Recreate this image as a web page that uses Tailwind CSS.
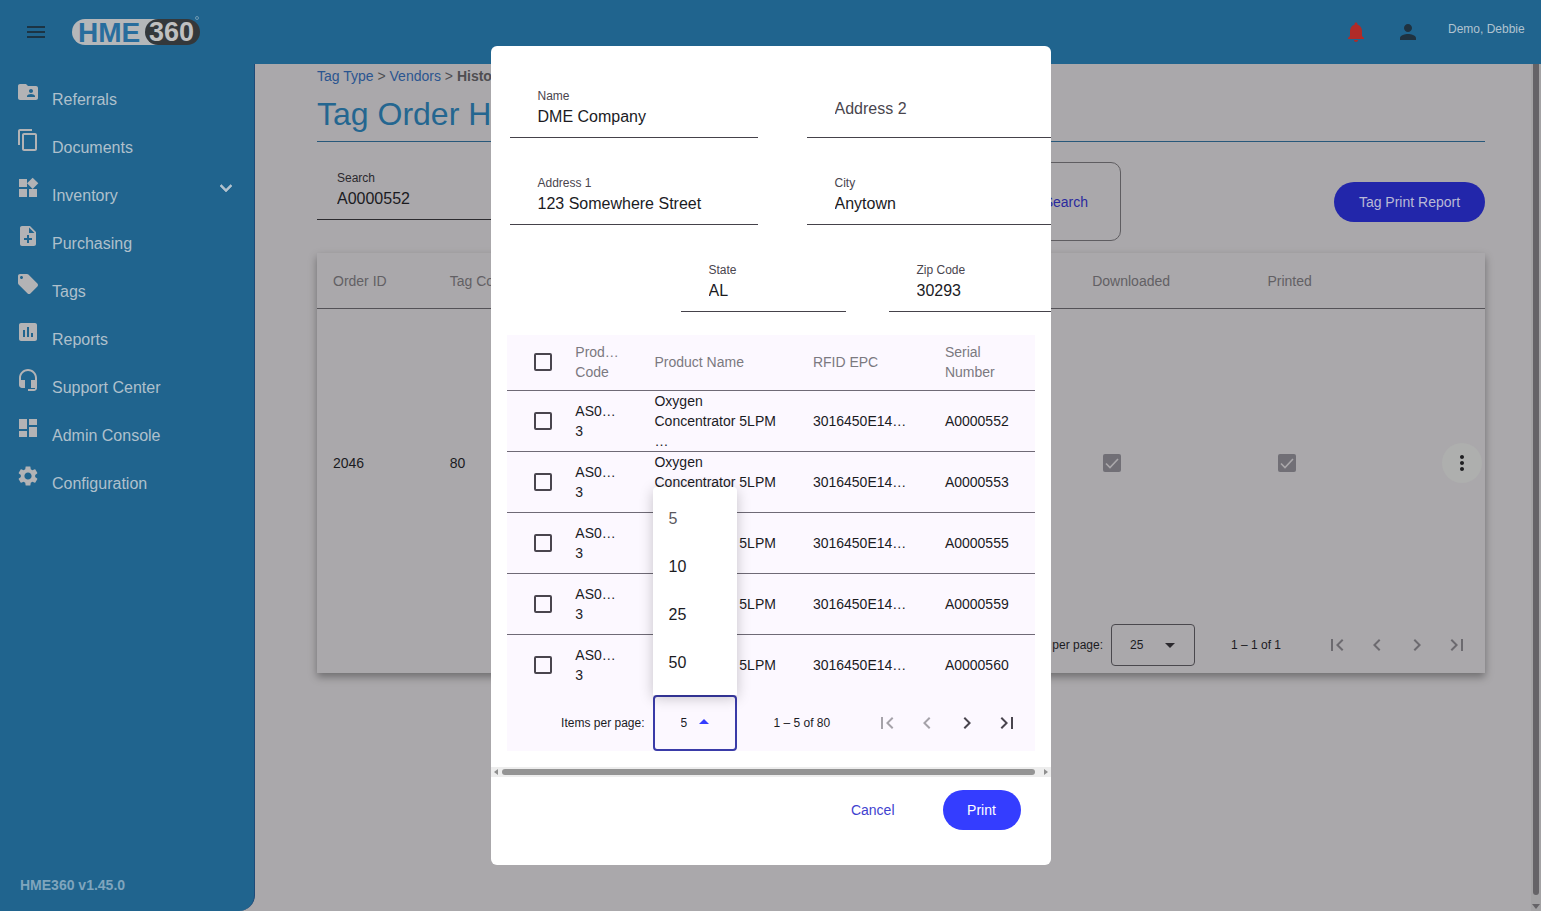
<!DOCTYPE html>
<html lang="en">

<head>
    <meta charset="UTF-8">
    <meta name="viewport" content="width=device-width, initial-scale=1.0">
    <title>HME360 - Tag Order History</title>
    <script src="https://cdn.jsdelivr.net/npm/@tailwindcss/browser@4"></script>
</head>

<body class="flex h-screen flex-col overflow-hidden bg-[#aaa8ab] font-['Liberation_Sans',Arial,sans-serif] text-sm text-[#1b1b1f]">

    <!-- Top bar -->
    <header class="flex h-16 shrink-0 items-center bg-[#20648e] pl-6 pr-4">
        <button aria-label="Menu" class="text-[#1c3444]">
            <svg class="size-6" viewBox="0 0 24 24" fill="currentColor"><path d="M3 18h18v-2H3v2zm0-5h18v-2H3v2zm0-7v2h18V6H3z"/></svg>
        </button>
        <a href="#" aria-label="HME360" class="ml-6">
            <svg class="h-8 w-[130px]" viewBox="0 0 130 32" font-family="Liberation Sans, Arial, sans-serif" font-weight="bold">
                <rect x="0" y="3" width="100" height="26" rx="13" fill="#b5b7b9"/>
                <rect x="73" y="3" width="55" height="26" rx="13" fill="#34383b"/>
                <text x="6" y="26" font-size="28" fill="#286d9d">HME</text>
                <text x="77" y="25" font-size="27" fill="#c0c0c0">360</text>
                <circle cx="125" cy="2" r="1.5" fill="none" stroke="#6f99b2"/>
            </svg>
        </a>
        <button aria-label="Notifications" class="ml-auto text-[#b02b28]">
            <svg class="size-6" viewBox="0 0 24 24" fill="currentColor"><path d="M12 22c1.1 0 2-.9 2-2h-4c0 1.1.89 2 2 2zm6-6v-5c0-3.07-1.64-5.64-4.5-6.32V4c0-.83-.67-1.5-1.5-1.5s-1.5.67-1.5 1.5v.68C7.63 5.36 6 7.92 6 11v5l-2 2v1h16v-1l-2-2z"/></svg>
        </button>
        <button aria-label="Account" class="ml-7 text-[#1f3240]">
            <svg class="size-6" viewBox="0 0 24 24" fill="currentColor"><path d="M12 12c2.21 0 4-1.79 4-4s-1.79-4-4-4-4 1.79-4 4 1.79 4 4 4zm0 2c-2.67 0-8 1.34-8 4v2h16v-2c0-2.66-5.33-4-8-4z"/></svg>
        </button>
        <span class="ml-7 w-[77px] pb-[6px] text-xs text-[#b0c3d0]">Demo, Debbie</span>
    </header>

    <div class="flex min-h-0 flex-1">

        <!-- Side navigation -->
        <aside class="flex w-[255px] shrink-0 flex-col rounded-br-2xl border-r border-[#1d4a78] bg-[#20648e]">
            <nav class="flex flex-col pt-4 text-base text-[#afc0cc]">
                <a href="#" class="flex h-12 items-start gap-3 pl-4">
                    <svg class="size-6 text-[#b3b3b5]" viewBox="0 0 24 24" fill="currentColor"><path d="M20 6h-8l-2-2H4c-1.1 0-1.99.9-1.99 2L2 18c0 1.1.9 2 2 2h16c1.1 0 2-.9 2-2V8c0-1.1-.9-2-2-2zm-5 3c1.1 0 2 .9 2 2s-.9 2-2 2-2-.9-2-2 .9-2 2-2zm4 8h-8v-1c0-1.33 2.67-2 4-2s4 .67 4 2v1z"/></svg>
                    <span class="pt-2">Referrals</span>
                </a>
                <a href="#" class="flex h-12 items-start gap-3 pl-4">
                    <svg class="size-6 text-[#b3b3b5]" viewBox="0 0 24 24" fill="currentColor"><path d="M16 1H4c-1.1 0-2 .9-2 2v14h2V3h12V1zm3 4H8c-1.1 0-2 .9-2 2v14c0 1.1.9 2 2 2h11c1.1 0 2-.9 2-2V7c0-1.1-.9-2-2-2zm0 16H8V7h11v14z"/></svg>
                    <span class="pt-2">Documents</span>
                </a>
                <a href="#" class="flex h-12 items-start gap-3 pl-4 pr-4">
                    <svg class="size-6 text-[#b3b3b5]" viewBox="0 0 24 24" fill="currentColor"><path d="M13 13v8h8v-8h-8zM3 21h8v-8H3v8zM3 3v8h8V3H3zm13.66-1.31L11 7.34 16.66 13l5.66-5.66-5.66-5.65z"/></svg>
                    <span class="pt-2">Inventory</span>
                    <svg class="ml-auto size-6 text-[#b3c3ce]" viewBox="0 0 24 24" fill="currentColor" stroke="currentColor" stroke-width=".6"><path d="M7.41 8.59L12 13.17l4.59-4.58L18 10l-6 6-6-6z"/></svg>
                </a>
                <a href="#" class="flex h-12 items-start gap-3 pl-4">
                    <svg class="size-6 text-[#b3b3b5]" viewBox="0 0 24 24" fill="currentColor"><path d="M14 2H6c-1.1 0-1.99.9-1.99 2L4 20c0 1.1.89 2 1.99 2H18c1.1 0 2-.9 2-2V8l-6-6zm2 14h-3v3h-2v-3H8v-2h3v-3h2v3h3v2zm-3-7V3.5L18.5 9H13z"/></svg>
                    <span class="pt-2">Purchasing</span>
                </a>
                <a href="#" class="flex h-12 items-start gap-3 pl-4">
                    <svg class="size-6 text-[#b3b3b5]" viewBox="0 0 24 24" fill="currentColor"><path d="M21.41 11.58l-9-9C12.05 2.22 11.55 2 11 2H4c-1.1 0-2 .9-2 2v7c0 .55.22 1.05.59 1.42l9 9c.36.36.86.58 1.41.58.55 0 1.05-.22 1.41-.59l7-7c.37-.36.59-.86.59-1.41 0-.55-.23-1.06-.59-1.42zM5.5 7C4.67 7 4 6.33 4 5.5S4.67 4 5.5 4 7 4.67 7 5.5 6.33 7 5.5 7z"/></svg>
                    <span class="pt-2">Tags</span>
                </a>
                <a href="#" class="flex h-12 items-start gap-3 pl-4">
                    <svg class="size-6 text-[#b3b3b5]" viewBox="0 0 24 24" fill="currentColor"><path d="M19 3H5c-1.1 0-2 .9-2 2v14c0 1.1.9 2 2 2h14c1.1 0 2-.9 2-2V5c0-1.1-.9-2-2-2zM9 17H7v-7h2v7zm4 0h-2V7h2v10zm4 0h-2v-4h2v4z"/></svg>
                    <span class="pt-2">Reports</span>
                </a>
                <a href="#" class="flex h-12 items-start gap-3 pl-4">
                    <svg class="size-6 text-[#b3b3b5]" viewBox="0 0 24 24" fill="currentColor"><path d="M12 1c-4.97 0-9 4.03-9 9v7c0 1.66 1.34 3 3 3h3v-8H5v-2c0-3.87 3.13-7 7-7s7 3.13 7 7v2h-4v8h4v1h-7v2h6c1.66 0 3-1.34 3-3V10c0-4.97-4.03-9-9-9z"/></svg>
                    <span class="pt-2">Support Center</span>
                </a>
                <a href="#" class="flex h-12 items-start gap-3 pl-4">
                    <svg class="size-6 text-[#b3b3b5]" viewBox="0 0 24 24" fill="currentColor"><path d="M3 13h8V3H3v10zm0 8h8v-6H3v6zm10 0h8V11h-8v10zm0-18v6h8V3h-8z"/></svg>
                    <span class="pt-2">Admin Console</span>
                </a>
                <a href="#" class="flex h-12 items-start gap-3 pl-4">
                    <svg class="size-6 text-[#b3b3b5]" viewBox="0 0 24 24" fill="currentColor"><path d="M19.14 12.94c.04-.3.06-.61.06-.94 0-.32-.02-.64-.07-.94l2.03-1.58c.18-.14.23-.41.12-.61l-1.92-3.32c-.12-.22-.37-.29-.59-.22l-2.39.96c-.5-.38-1.03-.7-1.62-.94l-.36-2.54c-.04-.24-.24-.41-.48-.41h-3.84c-.24 0-.43.17-.47.41l-.36 2.54c-.59.24-1.13.57-1.62.94l-2.39-.96c-.22-.08-.47 0-.59.22L2.74 8.87c-.12.21-.08.47.12.61l2.03 1.58c-.05.3-.09.63-.09.94s.02.64.07.94l-2.03 1.58c-.18.14-.23.41-.12.61l1.92 3.32c.12.22.37.29.59.22l2.39-.96c.5.38 1.03.7 1.62.94l.36 2.54c.05.24.24.41.48.41h3.84c.24 0 .44-.17.47-.41l.36-2.54c.59-.24 1.13-.56 1.62-.94l2.39.96c.22.08.47 0 .59-.22l1.92-3.32c.12-.22.07-.47-.12-.61l-2.01-1.58zM12 15.6c-1.98 0-3.6-1.62-3.6-3.6s1.62-3.6 3.6-3.6 3.6 1.62 3.6 3.6-1.62 3.6-3.6 3.6z"/></svg>
                    <span class="pt-2">Configuration</span>
                </a>
            </nav>
            <p class="mt-auto pb-4 pl-5 font-bold text-[#7fa5bd]">HME360 v1.45.0</p>
        </aside>

        <!-- Page content -->
        <main class="min-w-0 flex-1 overflow-hidden pl-[62px] pr-[46px]">
            <nav class="leading-6 text-[#4f4e51]">
                <a href="#" class="text-[#2a5590]">Tag Type</a> &gt;
                <a href="#" class="text-[#2a5590]">Vendors</a> &gt;
                <b>History</b>
            </nav>
            <h1 class="h-[54px] border-b border-[#28587a] text-[32px] leading-[52px] text-[#246690]">Tag Order History</h1>

            <div class="mt-5 flex items-center">
                <div class="mb-5 h-14 flex-1 border-b border-[#2c2b2f] pl-5 pt-[6px]">
                    <label for="search" class="block text-xs leading-4 text-[#2b292e]">Search</label>
                    <input id="search" type="text" value="A0000552" class="block h-[26px] w-full text-base outline-none">
                </div>
                <div class="ml-6 mr-[213px] flex h-[79px] w-[340px] items-center justify-end rounded-[10px] border border-[#5f5d61] pr-8">
                    <button class="text-[#2a2a9e]">Clear Search</button>
                </div>
                <button class="h-10 w-[151px] rounded-full bg-[#2226aa] text-[#b9b9d6]">Tag Print Report</button>
            </div>

            <section class="mt-3 shadow-[0_4px_8px_rgba(0,0,0,0.35)]">
                <table class="w-full table-fixed border-separate border-spacing-0 text-left">
                    <thead class="text-[#626064]">
                        <tr class="h-14">
                            <th class="w-[10%] border-b border-[#545257] px-4 font-normal">Order ID</th>
                            <th class="w-[10%] whitespace-nowrap border-b border-[#545257] px-4 font-normal">Tag Count</th>
                            <th class="w-[45%] border-b border-[#545257]"></th>
                            <th class="w-[15%] border-b border-[#545257] px-4 font-normal">Downloaded</th>
                            <th class="w-[20%] border-b border-[#545257] px-4 font-normal">Printed</th>
                        </tr>
                    </thead>
                    <tbody>
                        <tr class="h-[308px]">
                            <td class="px-4">2046</td>
                            <td class="px-4">80</td>
                            <td></td>
                            <td class="px-4">
                                <span class="relative ml-[11px] block size-[18px]">
                                    <input type="checkbox" checked disabled aria-label="Downloaded" class="block size-[18px] appearance-none rounded-xs bg-[#716f76]">
                                    <svg class="absolute inset-0" viewBox="0 0 18 18" fill="none" stroke="#aaa8ab" stroke-width="1.6"><path d="M3 9.5l4 4L15 5"/></svg>
                                </span>
                            </td>
                            <td class="pl-4 pr-[3px]">
                                <div class="flex items-center justify-between">
                                    <span class="relative ml-[11px] block size-[18px]">
                                        <input type="checkbox" checked disabled aria-label="Printed" class="block size-[18px] appearance-none rounded-xs bg-[#716f76]">
                                        <svg class="absolute inset-0" viewBox="0 0 18 18" fill="none" stroke="#aaa8ab" stroke-width="1.6"><path d="M3 9.5l4 4L15 5"/></svg>
                                    </span>
                                    <button aria-label="More" class="flex size-10 items-center justify-center rounded-full bg-[#aeafae]">
                                        <svg class="size-6" viewBox="0 0 24 24" fill="#1f1f22"><path d="M12 8c1.1 0 2-.9 2-2s-.9-2-2-2-2 .9-2 2 .9 2 2 2zm0 2c-1.1 0-2 .9-2 2s.9 2 2 2 2-.9 2-2-.9-2-2-2zm0 6c-1.1 0-2 .9-2 2s.9 2 2 2 2-.9 2-2-.9-2-2-2z"/></svg>
                                    </button>
                                </div>
                            </td>
                        </tr>
                    </tbody>
                </table>
                <div class="flex h-14 items-center justify-end pr-2 text-xs">
                    <label for="order-size">Items per page:</label>
                    <div class="relative ml-2">
                        <select id="order-size" class="block h-[42px] w-[84px] appearance-none rounded-sm border border-[#4a484d] pl-[18px] outline-none">
                            <option>25</option>
                        </select>
                        <svg class="pointer-events-none absolute right-[20px] top-[19px] h-[5px] w-[10px]" viewBox="0 0 10 5" fill="#2b292e"><path d="M0 0h10L5 5z"/></svg>
                    </div>
                    <span class="ml-9 mr-8 w-[54px] whitespace-nowrap">1 – 1 of 1</span>
                    <div class="flex text-[#6c6a6f]">
                        <button disabled aria-label="First page" class="flex size-10 items-center justify-center"><svg class="size-6" viewBox="0 0 24 24" fill="currentColor"><path d="M18.41 16.59L13.82 12l4.59-4.59L17 6l-6 6 6 6zM6 6h2v12H6z"/></svg></button>
                        <button disabled aria-label="Previous page" class="flex size-10 items-center justify-center"><svg class="size-6" viewBox="0 0 24 24" fill="currentColor"><path d="M15.41 7.41L14 6l-6 6 6 6 1.41-1.41L10.83 12z"/></svg></button>
                        <button disabled aria-label="Next page" class="flex size-10 items-center justify-center"><svg class="size-6" viewBox="0 0 24 24" fill="currentColor"><path d="M10 6L8.59 7.41 13.17 12l-4.58 4.59L10 18l6-6z"/></svg></button>
                        <button disabled aria-label="Last page" class="flex size-10 items-center justify-center"><svg class="size-6" viewBox="0 0 24 24" fill="currentColor"><path d="M5.59 7.41L10.18 12l-4.59 4.59L7 18l6-6-6-6zM16 6h2v12h-2z"/></svg></button>
                    </div>
                </div>
            </section>
        </main>

        <!-- Page scrollbar -->
        <div class="flex w-[10px] shrink-0 flex-col items-center bg-[#a3a2a4]">
            <div class="w-[6px] flex-1 rounded-b-full bg-[#656367]"></div>
            <svg class="mb-[2px] mt-[9px] h-[5px] w-2" viewBox="0 0 8 5" fill="#656367"><path d="M0 0h8L4 5z"/></svg>
        </div>
    </div>

    <!-- Print dialog -->
    <div class="fixed inset-0 flex items-center justify-center">
        <div role="dialog" aria-label="Print tags" class="w-[560px] overflow-hidden rounded-md bg-white">
            <div class="overflow-hidden pt-9">
                <form class="ml-[19px] flex w-[545px] flex-col gap-[31px]">
                    <div class="flex justify-between">
                        <div class="h-14 w-[248px] border-b border-[#45424a] pl-7 pt-[6px]">
                            <label for="name" class="block text-xs leading-4 text-[#49454e]">Name</label>
                            <input id="name" type="text" value="DME Company" class="block h-[26px] w-full text-base outline-none">
                        </div>
                        <div class="h-14 w-[248px] border-b border-[#45424a] pl-7">
                            <input type="text" aria-label="Address 2" placeholder="Address 2" class="block h-[54px] w-full text-base outline-none placeholder:text-[#49454e]">
                        </div>
                    </div>
                    <div class="flex justify-between">
                        <div class="h-14 w-[248px] border-b border-[#45424a] pl-7 pt-[6px]">
                            <label for="address1" class="block text-xs leading-4 text-[#49454e]">Address 1</label>
                            <input id="address1" type="text" value="123 Somewhere Street" class="block h-[26px] w-full text-base outline-none">
                        </div>
                        <div class="h-14 w-[248px] border-b border-[#45424a] pl-7 pt-[6px]">
                            <label for="city" class="block text-xs leading-4 text-[#49454e]">City</label>
                            <input id="city" type="text" value="Anytown" class="block h-[26px] w-full text-base outline-none">
                        </div>
                    </div>
                    <div class="flex justify-end gap-[43px] pr-px">
                        <div class="h-14 w-[165px] border-b border-[#45424a] pl-7 pt-[6px]">
                            <label for="state" class="block text-xs leading-4 text-[#49454e]">State</label>
                            <input id="state" type="text" value="AL" class="block h-[26px] w-full text-base outline-none">
                        </div>
                        <div class="h-14 w-[165px] border-b border-[#45424a] pl-7 pt-[6px]">
                            <label for="zip" class="block text-xs leading-4 text-[#49454e]">Zip Code</label>
                            <input id="zip" type="text" value="30293" class="block h-[26px] w-full text-base outline-none">
                        </div>
                    </div>
                </form>

                <div class="mx-4 mb-4 mt-[23px] bg-[#fcf8ff]">
                    <table class="w-full table-fixed border-separate border-spacing-0 text-left leading-5 [&_td]:py-0 [&_th]:pt-0 [&_th]:pb-[2px] [&_tr:not(:last-child)_td]:border-b [&_td]:border-[#6f6a76] [&_th]:border-b [&_th]:border-[#6f6a76]">
                        <thead class="text-[#7b797f]">
                            <tr class="h-14">
                                <th class="w-[10%] pl-[27px]"><input type="checkbox" aria-label="Select all" class="block size-[18px] appearance-none rounded-xs border-2 border-[#49454e]"></th>
                                <th class="w-[15%] px-4 font-normal">Prod…<br>Code</th>
                                <th class="w-[30%] px-4 font-normal">Product Name</th>
                                <th class="w-[25%] px-4 font-normal">RFID EPC</th>
                                <th class="w-[20%] px-4 font-normal">Serial Number</th>
                            </tr>
                        </thead>
                        <tbody>
                            <tr>
                                <td class="pl-[27px]"><input type="checkbox" aria-label="Select A0000552" class="block size-[18px] appearance-none rounded-xs border-2 border-[#49454e]"></td>
                                <td class="px-4">AS0…<br>3</td>
                                <td class="whitespace-nowrap px-4">Oxygen<br>Concentrator 5LPM<br>…</td>
                                <td class="px-4">3016450E14…</td>
                                <td class="px-4">A0000552</td>
                            </tr>
                            <tr>
                                <td class="pl-[27px]"><input type="checkbox" aria-label="Select A0000553" class="block size-[18px] appearance-none rounded-xs border-2 border-[#49454e]"></td>
                                <td class="px-4">AS0…<br>3</td>
                                <td class="whitespace-nowrap px-4">Oxygen<br>Concentrator 5LPM<br>…</td>
                                <td class="px-4">3016450E14…</td>
                                <td class="px-4">A0000553</td>
                            </tr>
                            <tr>
                                <td class="pl-[27px]"><input type="checkbox" aria-label="Select A0000555" class="block size-[18px] appearance-none rounded-xs border-2 border-[#49454e]"></td>
                                <td class="px-4">AS0…<br>3</td>
                                <td class="whitespace-nowrap px-4">Oxygen<br>Concentrator 5LPM<br>…</td>
                                <td class="px-4">3016450E14…</td>
                                <td class="px-4">A0000555</td>
                            </tr>
                            <tr>
                                <td class="pl-[27px]"><input type="checkbox" aria-label="Select A0000559" class="block size-[18px] appearance-none rounded-xs border-2 border-[#49454e]"></td>
                                <td class="px-4">AS0…<br>3</td>
                                <td class="whitespace-nowrap px-4">Oxygen<br>Concentrator 5LPM<br>…</td>
                                <td class="px-4">3016450E14…</td>
                                <td class="px-4">A0000559</td>
                            </tr>
                            <tr>
                                <td class="pl-[27px]"><input type="checkbox" aria-label="Select A0000560" class="block size-[18px] appearance-none rounded-xs border-2 border-[#49454e]"></td>
                                <td class="px-4">AS0…<br>3</td>
                                <td class="whitespace-nowrap px-4">Oxygen<br>Concentrator 5LPM<br>…</td>
                                <td class="px-4">3016450E14…</td>
                                <td class="px-4">A0000560</td>
                            </tr>
                        </tbody>
                    </table>

                    <div class="flex h-14 items-center justify-end pr-2 text-xs">
                        <label for="page-size">Items per page:</label>
                        <div class="relative ml-2">
                            <select id="page-size" class="block h-14 w-[84px] appearance-none rounded-sm border-2 border-[#3a3ba8] pl-[26px] outline-none">
                                <option>5</option>
                                <option>10</option>
                                <option>25</option>
                                <option>50</option>
                            </select>
                            <svg class="pointer-events-none absolute right-[28px] top-6 h-[5px] w-[10px]" viewBox="0 0 10 5" fill="#343dff"><path d="M0 5h10L5 0z"/></svg>
                            <!-- Open size menu -->
                            <ul class="absolute bottom-full left-0 w-full rounded-t-sm bg-white py-2 text-base leading-[48px] shadow-[0_3px_14px_rgba(0,0,0,0.22)]">
                                <li class="pl-4 text-[#5a585e]">5</li>
                                <li class="pl-4">10</li>
                                <li class="pl-4">25</li>
                                <li class="pl-4">50</li>
                            </ul>
                        </div>
                        <span class="ml-[37px] mr-8 w-[61px] whitespace-nowrap">1 – 5 of 80</span>
                        <div class="flex text-[#49454e]">
                            <button disabled aria-label="First page" class="flex size-10 items-center justify-center text-[#a5a2a9]"><svg class="size-6" viewBox="0 0 24 24" fill="currentColor"><path d="M18.41 16.59L13.82 12l4.59-4.59L17 6l-6 6 6 6zM6 6h2v12H6z"/></svg></button>
                            <button disabled aria-label="Previous page" class="flex size-10 items-center justify-center text-[#a5a2a9]"><svg class="size-6" viewBox="0 0 24 24" fill="currentColor"><path d="M15.41 7.41L14 6l-6 6 6 6 1.41-1.41L10.83 12z"/></svg></button>
                            <button aria-label="Next page" class="flex size-10 items-center justify-center"><svg class="size-6" viewBox="0 0 24 24" fill="currentColor"><path d="M10 6L8.59 7.41 13.17 12l-4.58 4.59L10 18l6-6z"/></svg></button>
                            <button aria-label="Last page" class="flex size-10 items-center justify-center"><svg class="size-6" viewBox="0 0 24 24" fill="currentColor"><path d="M5.59 7.41L10.18 12l-4.59 4.59L7 18l6-6-6-6zM16 6h2v12h-2z"/></svg></button>
                        </div>
                    </div>
                </div>

                <!-- Dialog scrollbar -->
                <div class="flex h-[10px] items-center gap-1 bg-[#ededed] px-[3px] text-[#8f8f8f]">
                    <svg class="h-[6px] w-1" viewBox="0 0 4 6" fill="currentColor"><path d="M4 0v6L0 3z"/></svg>
                    <div class="mr-[5px] h-[6px] flex-1 rounded-full bg-[#949494]"></div>
                    <svg class="h-[6px] w-1" viewBox="0 0 4 6" fill="currentColor"><path d="M0 0v6l4-3z"/></svg>
                </div>
            </div>

            <div class="flex justify-end gap-6 pb-[35px] pr-[30px] pt-[13px]">
                <button class="h-10 px-6 text-[#3f42cf]">Cancel</button>
                <button class="h-10 w-[78px] rounded-full bg-[#343dff] text-white">Print</button>
            </div>
        </div>
    </div>
</body>

</html>
